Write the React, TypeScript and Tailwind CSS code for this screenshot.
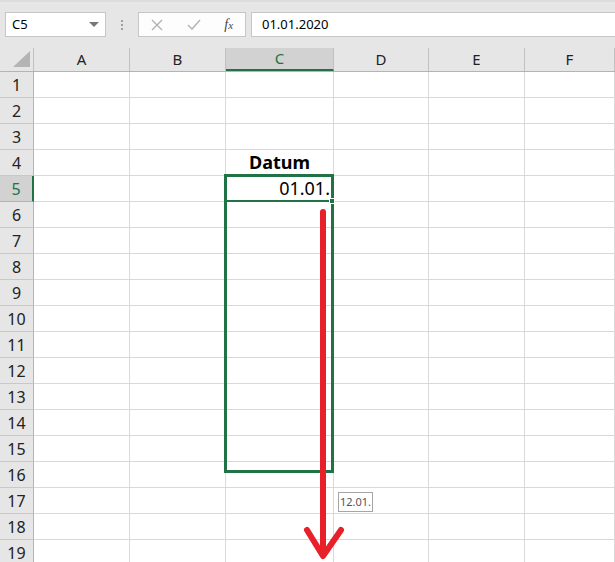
import React from "react";

const cols = [
  { name: "A", w: "w-[96px]" },
  { name: "B", w: "w-[96px]" },
  { name: "C", w: "w-[108px]" },
  { name: "D", w: "w-[95px]" },
  { name: "E", w: "w-[96px]" },
  { name: "F", w: "w-[90px]" },
];

const rows = Array.from({ length: 19 }, (_, i) => i + 1);

const cellText = (row: number, col: string) => {
  if (row === 4 && col === "C") return <span className="w-full text-center font-bold">Datum</span>;
  if (row === 5 && col === "C") return <span className="w-full text-right pr-[3px]">01.01.</span>;
  return null;
};

const App = () => {
  return (
    <div
      className="relative w-[615px] h-[562px] overflow-hidden bg-white text-black"
      style={{ fontFamily: '"Noto Sans", "Open Sans", sans-serif' }}
    >
      {/* formula bar */}
      <div className="h-[48px] bg-[#e6e6e6] flex items-start pt-[12px] pl-[5px] border-t-2 border-[#dcdcdc]">
        <div className="w-[101px] h-[25px] bg-white border border-[#c6c6c6] flex items-center justify-between px-[6px] text-[13px] -mt-[2px]">
          <span>C5</span>
          <svg width="10" height="6" viewBox="0 0 10 6">
            <path d="M0 0 H10 L5 5 Z" fill="#777" />
          </svg>
        </div>
        <div className="w-[32px] h-[25px] flex flex-col items-center justify-center gap-[2px] -mt-[2px]">
          <span className="w-[2px] h-[2px] bg-[#a0a0a0]" />
          <span className="w-[2px] h-[2px] bg-[#a0a0a0]" />
          <span className="w-[2px] h-[2px] bg-[#a0a0a0]" />
        </div>
        <div className="w-[108px] h-[25px] bg-[#fdfdfd] border border-[#c6c6c6] flex items-center justify-around -mt-[2px]">
          <svg width="12" height="12" viewBox="0 0 12 12">
            <path d="M1 1 L11 11 M11 1 L1 11" stroke="#b0b0b0" strokeWidth="1.3" />
          </svg>
          <svg width="14" height="12" viewBox="0 0 14 12">
            <path d="M1 6 L5 10 L13 1" stroke="#b8b8b8" strokeWidth="1.6" fill="none" />
          </svg>
          <span
            className="italic text-[14px] text-[#444]"
            style={{ fontFamily: '"Liberation Serif", serif' }}
          >
            f<span className="text-[11px]">x</span>
          </span>
        </div>
        <div className="flex-1 h-[25px] ml-[5px] bg-white border border-[#c6c6c6] border-r-0 flex items-center pl-[10px] text-[13px] -mt-[2px]">
          01.01.2020
        </div>
      </div>

      {/* column headers */}
      <div className="flex h-[24px] bg-[#e6e6e6] border-b border-[#b4b4b4]">
        <div className="w-[34px] relative border-r border-[#c0c0c0]">
          <svg className="absolute right-[3px] bottom-[4px]" width="17" height="16" viewBox="0 0 17 16">
            <path d="M17 0 L17 16 L0 16 Z" fill="#b4b4b4" />
          </svg>
        </div>
        {cols.map((c) =>
          c.name === "C" ? (
            <div
              key={c.name}
              className={`${c.w} bg-[#d2d2d2] border-b-2 border-[#217346] border-r border-r-[#c0c0c0] flex items-center justify-center text-[15px] text-[#217346]`}
            >
              {c.name}
            </div>
          ) : (
            <div
              key={c.name}
              className={`${c.w} border-r border-[#c0c0c0] flex items-center justify-center text-[15px] text-[#222]`}
            >
              {c.name}
            </div>
          )
        )}
      </div>

      {/* rows */}
      {rows.map((r) => (
        <div key={r} className="flex h-[26px]">
          {r === 5 ? (
            <div className="w-[34px] bg-[#d2d2d2] border-r-2 border-[#217346] border-b border-b-[#b4b4b4] flex items-center justify-center text-[16px] text-[#217346]">
              {r}
            </div>
          ) : (
            <div className="w-[34px] bg-[#e6e6e6] border-r border-[#b4b4b4] border-b border-b-[#c8c8c8] flex items-center justify-center text-[16px] text-[#222]">
              {r}
            </div>
          )}
          {cols.map((c) => (
            <div
              key={c.name}
              className={`${c.w} border-r border-b border-[#d9d9d9] flex items-center text-[18px]`}
            >
              {cellText(r, c.name)}
            </div>
          ))}
        </div>
      ))}

      {/* selection */}
      <div className="absolute left-[224px] top-[174px] w-[110px] h-[299px] border-[3px] border-[#217346]" />
      <div className="absolute left-[225px] top-[200px] w-[106px] h-[2px] bg-[#217346]" />
      <div className="absolute left-[329px] top-[198px] w-[6px] h-[6px] bg-[#217346] border border-white" />

      {/* tooltip */}
      <div className="absolute left-[338px] top-[492px] w-[35px] h-[20px] bg-white border border-[#a6a6a6] flex items-center justify-center text-[11px] text-[#555]">
        12.01.
      </div>

      {/* arrow */}
      <svg className="absolute left-0 top-0 pointer-events-none" width="615" height="562" viewBox="0 0 615 562">
        <path d="M323 212 L323 553" stroke="#e8202a" strokeWidth="6" strokeLinecap="round" />
        <path d="M307 530 L323 556 L341 530" stroke="#e8202a" strokeWidth="6" fill="none" strokeLinecap="round" strokeLinejoin="round" />
      </svg>
    </div>
  );
};

export default App;
